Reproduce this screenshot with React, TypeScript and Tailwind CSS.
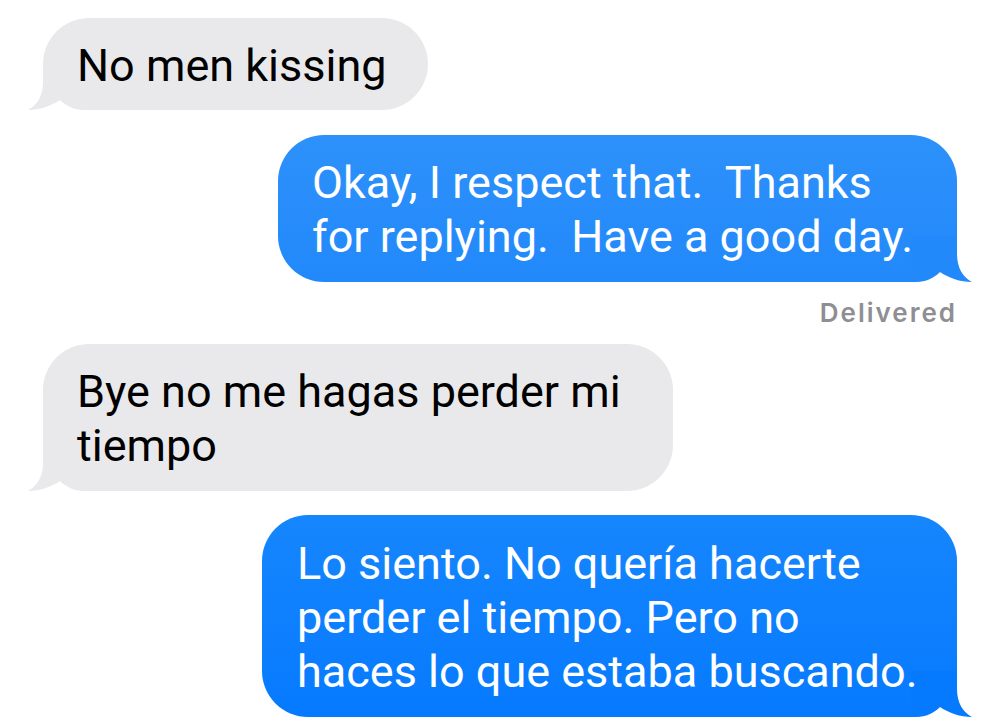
import React from "react";

const Tail = ({ color, flip }: { color: string; flip?: boolean }) => (
  <svg
    viewBox="0 0 61 46"
    className={
      flip
        ? "absolute -right-[15px] bottom-0 w-[61px] h-[46px] -scale-x-100"
        : "absolute -left-[15px] bottom-0 w-[61px] h-[46px]"
    }
  >
    <path
      d="M15 0 L15 18 C15 32 9 41 0 46 C12 46 23 42 32 36 C38 42 46 46 56 46 L61 46 L61 0 Z"
      fill={color}
    />
  </svg>
);

const App = () => {
  return (
    <div
      className="w-[1000px] h-[728px] bg-white overflow-hidden pl-[43px] pr-[43px] pt-[18px] flex flex-col"
      style={{ fontFamily: "Roboto, 'Liberation Sans', sans-serif" }}
    >
      <div className="relative self-start w-[385px] h-[92px] rounded-[46px] bg-[#e9e9eb] pl-[34px] pt-[21px] text-[45px] leading-[54px] text-black">
        <Tail color="#e9e9eb" />
        <span className="relative">No men kissing</span>
      </div>

      <div className="relative self-end mt-[25px] w-[679px] h-[147px] rounded-[46px] bg-linear-to-b from-[#2d91fa] to-[#2289fb] pl-[34px] pt-[21px] text-[45px] leading-[54px] text-white">
        <Tail color="#2289fb" flip />
        <p className="relative">
          Okay, I respect that.&nbsp; Thanks
          <br />
          for replying.&nbsp; Have a good day.
        </p>
      </div>

      <div
        className="self-end mt-[16px] text-[26px] leading-[30px] font-semibold tracking-[2px] text-[#8e8e93]"
        style={{ fontFamily: "Inter, sans-serif" }}
      >
        Delivered
      </div>

      <div className="relative self-start mt-[16px] w-[630px] h-[147px] rounded-[46px] bg-[#e9e9eb] pl-[34px] pt-[21px] text-[45px] leading-[54px] text-black">
        <Tail color="#e9e9eb" />
        <p className="relative">
          Bye no me hagas perder mi
          <br />
          tiempo
        </p>
      </div>

      <div className="relative self-end mt-[24px] w-[695px] h-[202px] rounded-[46px] bg-linear-to-b from-[#1686fd] to-[#067aff] pl-[35px] pt-[22px] text-[45px] leading-[54px] text-white">
        <Tail color="#067aff" flip />
        <p className="relative">
          Lo siento. No quería hacerte
          <br />
          perder el tiempo. Pero no
          <br />
          haces lo que estaba buscando.
        </p>
      </div>
    </div>
  );
};

export default App;
